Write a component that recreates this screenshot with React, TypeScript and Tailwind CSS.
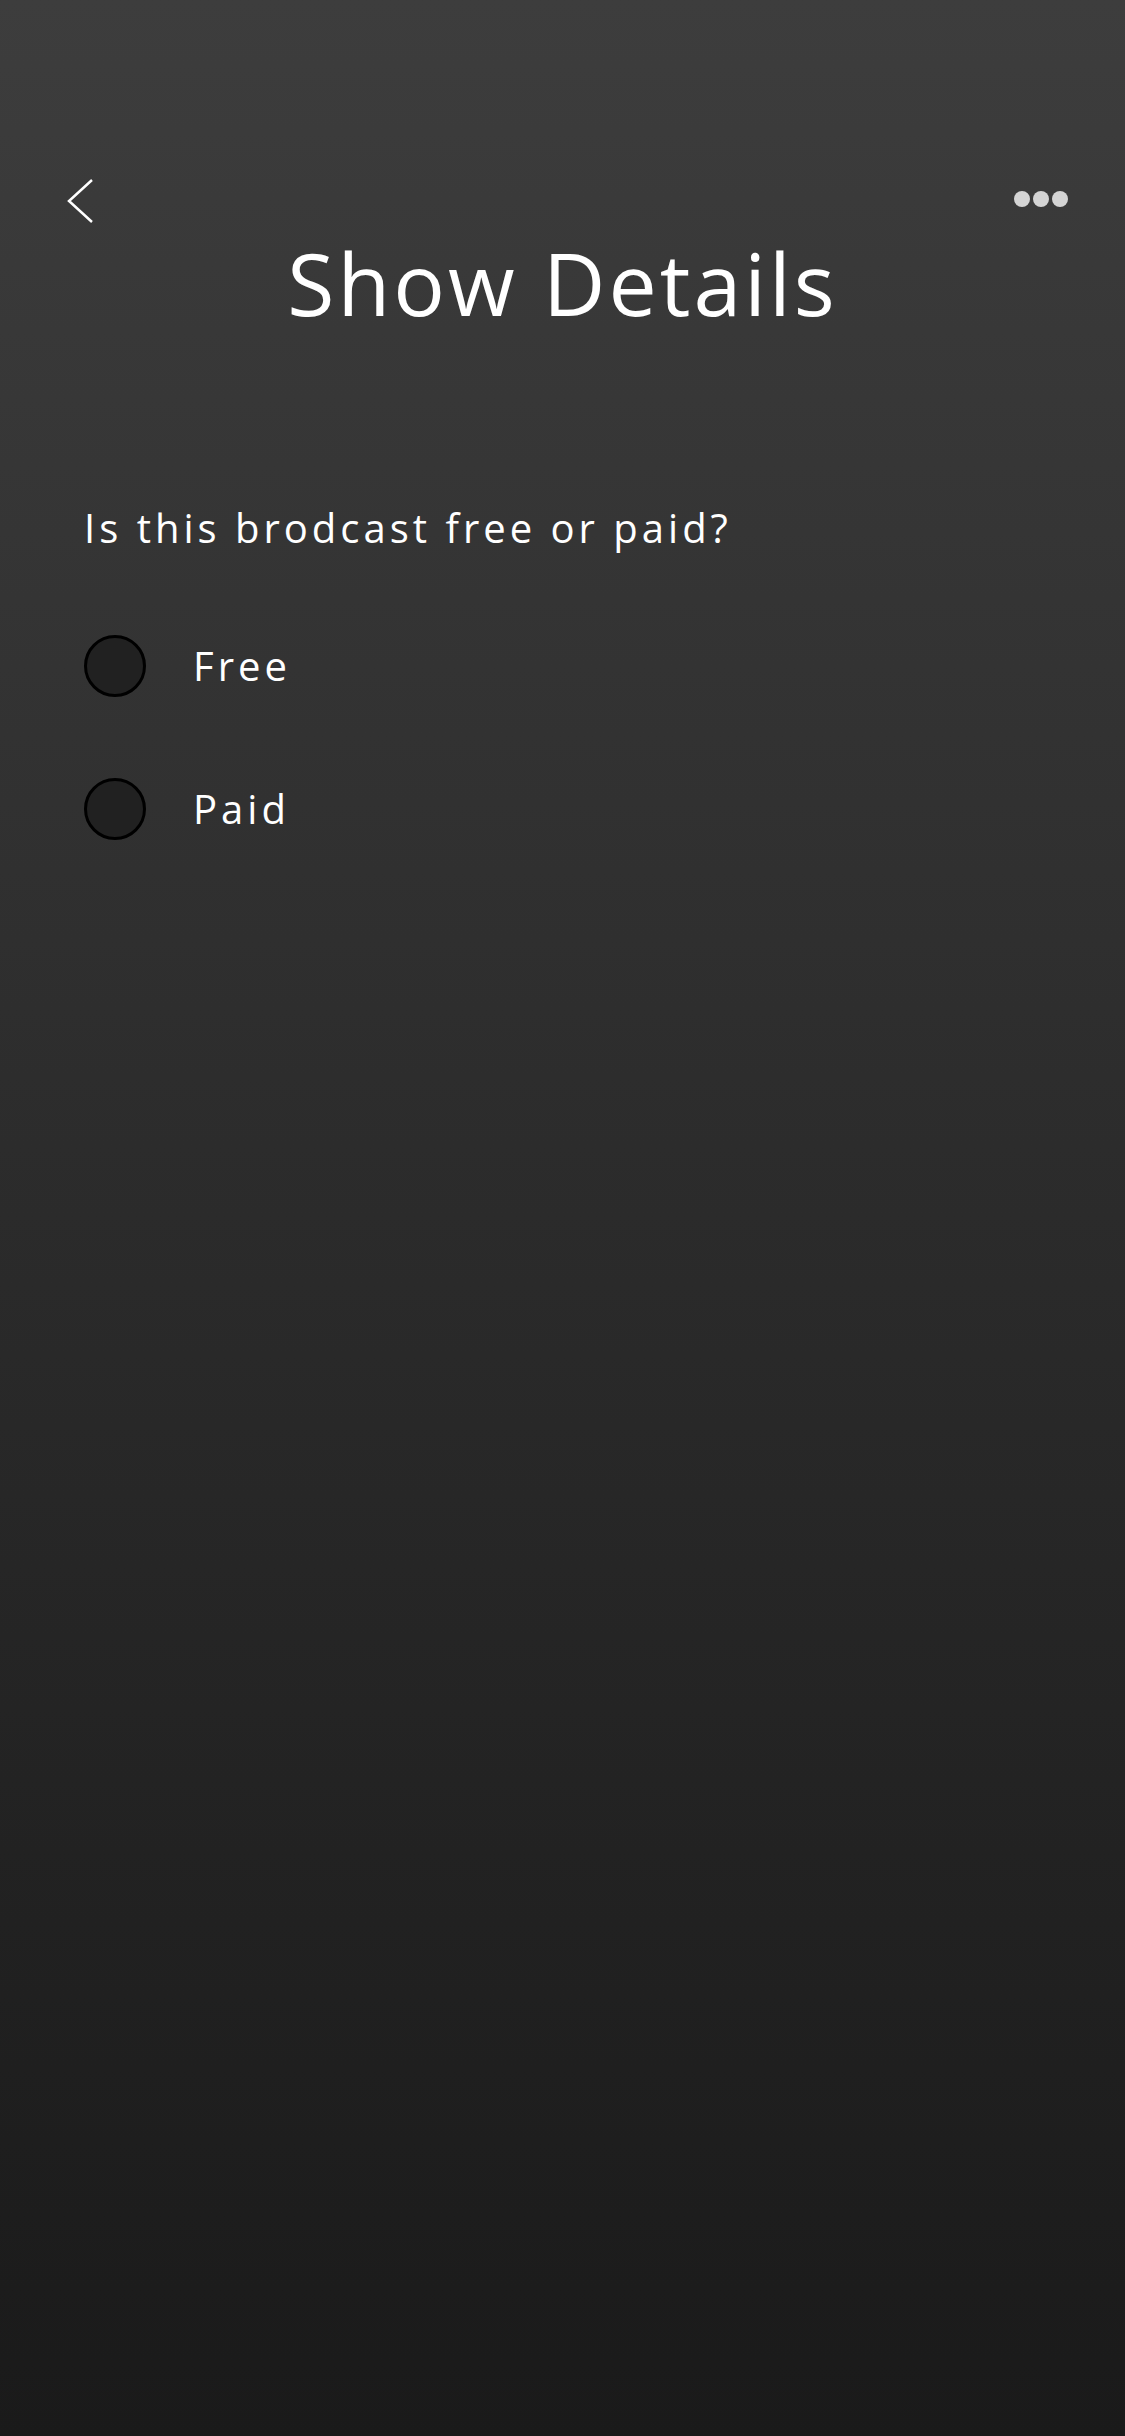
import React, { useState } from 'react';

const options = ['Free', 'Paid'];

const ShowDetails = () => {
  const [selected, setSelected] = useState<string | null>(null);

  return (
    <div
      className="min-h-[2436px] w-full bg-gradient-to-b from-[#3d3d3d] to-[#1a1a1a] text-white"
      style={{ fontFamily: '"Open Sans", "Liberation Sans", sans-serif' }}
    >
      <div className="flex items-center justify-between pt-[178px] pl-[66px] pr-[57px]">
        <button className="h-[46px] w-[28px]">
          <svg width="28" height="46" viewBox="0 0 28 46" fill="none">
            <path d="M26 2 L3 23 L26 44" stroke="#ffffff" strokeWidth="2.5" strokeLinejoin="miter" />
          </svg>
        </button>
        <button className="-mt-[4px] flex items-center gap-[3px]">
          <span className="h-[16px] w-[16px] rounded-full bg-[#d4d4d4]" />
          <span className="h-[16px] w-[16px] rounded-full bg-[#d4d4d4]" />
          <span className="h-[16px] w-[16px] rounded-full bg-[#d4d4d4]" />
        </button>
      </div>

      <h1 className="mt-[9px] text-center text-[86px] leading-[100px] font-normal tracking-[0.035em]">
        Show Details
      </h1>

      <div className="px-[84px] pt-[167px]">
        <p className="text-[40px] leading-[56px] tracking-[0.1em]">Is this brodcast free or paid?</p>

        <div className="mt-[79px] flex flex-col gap-[81px]">
          {options.map(opt => (
            <button
              key={opt}
              onClick={() => setSelected(opt)}
              className="flex items-center gap-[47px] text-left"
            >
              <span className="flex h-[62px] w-[62px] items-center justify-center rounded-full border-[3px] border-black bg-[#212121]">
                {selected === opt && <span className="h-[30px] w-[30px] rounded-full bg-white" />}
              </span>
              <span className="text-[40px] leading-[56px] tracking-[0.1em]">{opt}</span>
            </button>
          ))}
        </div>
      </div>
    </div>
  );
};

export default ShowDetails;
